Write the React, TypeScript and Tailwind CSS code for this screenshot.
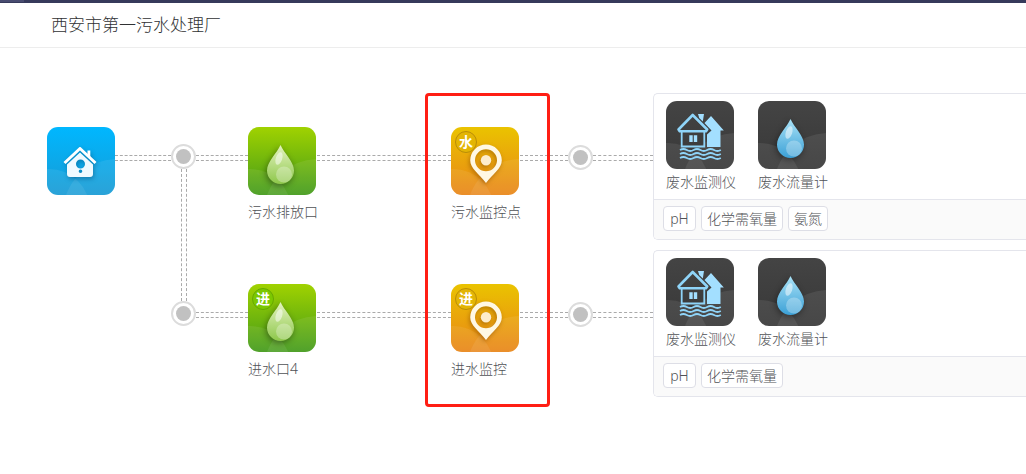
import type { ReactNode } from "react";

type Tone = "blue" | "green" | "orange" | "dark";

const tones: Record<Tone, [string, string]> = {
  blue: ["#00b7ff", "#189bd4"],
  green: ["#a0d200", "#429a1a"],
  orange: ["#eac300", "#e98518"],
  dark: ["#444444", "#383838"],
};

const badgeTones: Record<string, string> = {
  green: "bg-[#7cc800] border-[#67a800]",
  orange: "bg-[#e3b505] border-[#b98d08]",
};

function Tile({
  tone,
  badge,
  children,
}: {
  tone: Tone;
  badge?: string;
  children: ReactNode;
}) {
  const [from, to] = tones[tone];
  return (
    <div className="relative size-[68px] shrink-0 overflow-hidden rounded-[11px]">
      <svg viewBox="0 0 68 68" className="block size-full" aria-hidden="true">
        <defs>
          <linearGradient id={`bg-${tone}`} x1="0" y1="0" x2="0" y2="1">
            <stop offset="0" stopColor={from} />
            <stop offset="1" stopColor={to} />
          </linearGradient>
        </defs>
        <rect width="68" height="68" fill={`url(#bg-${tone})`} />
        {/* Hills */}
        <circle cx="2" cy="83" r="41" fill="#fff" opacity="0.08" />
        <circle cx="70" cy="86" r="54" fill="#fff" opacity="0.08" />
        {children}
      </svg>
      {badge && (
        <span
          className={`absolute top-1 left-1 flex size-[22px] items-center justify-center rounded-full border text-[14px] leading-none font-bold text-white ${badgeTones[tone]}`}
        >
          {badge}
        </span>
      )}
    </div>
  );
}

function HomeGlyph() {
  return (
    <g style={{ filter: "drop-shadow(1px 2px 2px rgba(0,60,100,0.4))" }}>
      <path
        d="M17.5 36 33 21.500 48.500 36"
        fill="none"
        stroke="#fff"
        strokeWidth="3"
        strokeLinejoin="round"
      />
      <path d="M40.500 23.500h2.800v8l-2.800-2.600z" fill="#fff" />
      <path
        fillRule="evenodd"
        fill="#effaff"
        d="M33 25.500 20 37.500v9.500q0 3 3 3h20q3 0 3-3V37.500zM33.500 32.500a4.500 4.500 0 1 1 0 9 4.500 4.500 0 0 1 0-9zM33.500 42.500a1.800 1.800 0 1 1 0 3.600 1.800 1.800 0 0 1 0-3.600z"
      />
    </g>
  );
}

function DropGlyph({ tone }: { tone: "green" | "blue" }) {
  const green = tone === "green";
  return (
    <g>
      <defs>
        <linearGradient id={`drop-${tone}`} x1="0" y1="0" x2="0" y2="1">
          <stop offset="0" stopColor={green ? "#e4f3c0" : "#a9e2f7"} />
          <stop offset="1" stopColor={green ? "#8dc74a" : "#3ba0d6"} />
        </linearGradient>
      </defs>
      <path
        d="M32.500 18C29 26 19 35 19 43.500a13.500 13.500 0 0 0 27 0C46 35 36 26 32.500 18z"
        fill={`url(#drop-${tone})`}
        style={{ filter: "drop-shadow(-1px 2px 3px rgba(0,0,0,0.4))" }}
      />
      <circle cx="36" cy="47.500" r="8" fill="#fff" opacity="0.28" />
      <ellipse
        cx="31"
        cy="31.500"
        rx="3.200"
        ry="6.500"
        transform="rotate(18 31 31.500)"
        fill="#fff"
        opacity="0.5"
      />
    </g>
  );
}

function PinGlyph() {
  return (
    <g style={{ filter: "drop-shadow(-1px 2px 2px rgba(130,70,0,0.5))" }}>
      <path
        fillRule="evenodd"
        fill="#fff8e4"
        d="M35 17.500a15.800 15.800 0 0 0-15.800 15.800c0 8 9 14 15.800 22.700 6.800-8.700 15.800-14.700 15.800-22.700A15.800 15.800 0 0 0 35 17.500zM35 22.300a11 11 0 1 1 0 22 11 11 0 0 1 0-22z"
      />
      <circle cx="35" cy="33.300" r="5.200" fill="#fdeccb" />
    </g>
  );
}

function MonitorGlyph() {
  return (
    <g fill="none" stroke="#8fd4f8">
      {/* Back building */}
      <path
        d="M45 15 57.800 29.500H54.500V46H41V33.500L45.500 29.500 38.500 22z"
        fill="#a3dfff"
        stroke="none"
      />
      <path d="M32 13h6l-1.200 7.500-3.600-3.500z" fill="#a3dfff" stroke="none" />
      <path
        d="M12.500 28.500 26.700 14l14.500 14.500-1.200 1.700H13.700z"
        strokeWidth="2.600"
        strokeLinejoin="round"
      />
      <path d="M15.700 31v14.500h22.600V31" strokeWidth="1.800" />
      <path d="M23.300 34.300h3.400v6.700h-3.400zM27.800 34.300h3.400v6.700h-3.400z" fill="#a3dfff" stroke="none" />
      {[49, 53, 57].map((y) => (
        <path
          key={y}
          d={`M14 ${y}q3.400-2 6.800 0t6.800 0 6.800 0 6.800 0 6.800 0 6.800 0`}
          strokeWidth="1.800"
        />
      ))}
    </g>
  );
}

function Connector({ className }: { className: string }) {
  return (
    <div
      className={`mt-[62px] h-[6px] shrink-0 border-y border-dashed border-[#aaa] ${className}`}
    />
  );
}

function Node() {
  return (
    <div className="flex size-[25px] shrink-0 items-center justify-center rounded-full border-2 border-[#dcdcdc] bg-white">
      <div className="size-[15px] rounded-full bg-[#c1c1c1]" />
    </div>
  );
}

function Station({ label, children }: { label: string; children: ReactNode }) {
  return (
    <div className="w-[69px] shrink-0 pt-[34px]">
      {children}
      <p className="mt-[7px] leading-5 whitespace-nowrap">{label}</p>
    </div>
  );
}

function DevicePanel({ factors }: { factors: string[] }) {
  return (
    <section className="min-w-0 flex-1 overflow-hidden rounded-l-[5px] border border-r-0 border-[#e4e5ec]">
      <div className="flex gap-6 px-3 pt-[7px] pb-[7px]">
        <div className="w-[68px]">
          <Tile tone="dark">
            <MonitorGlyph />
          </Tile>
          <p className="mt-[3px] leading-5 whitespace-nowrap">废水监测仪</p>
        </div>
        <div className="w-[68px]">
          <Tile tone="dark">
            <DropGlyph tone="blue" />
          </Tile>
          <p className="mt-[3px] leading-5 whitespace-nowrap">废水流量计</p>
        </div>
      </div>
      <ul className="flex gap-[5px] border-t border-[#e4e5ec] bg-[#fafafa] px-[9px] pt-[6px] pb-2">
        {factors.map((factor) => (
          <li
            key={factor}
            className="flex h-[25px] min-w-[33px] items-center justify-center rounded border border-[#dddee6] bg-white px-[5px]"
          >
            {factor}
          </li>
        ))}
      </ul>
    </section>
  );
}

const lines = [
  {
    outlet: "污水排放口",
    point: "污水监控点",
    pointBadge: "水",
    factors: ["pH", "化学需氧量", "氨氮"],
  },
  {
    outlet: "进水口4",
    outletBadge: "进",
    point: "进水监控",
    pointBadge: "进",
    factors: ["pH", "化学需氧量"],
  },
];

export default function App() {
  return (
    <div className="min-h-screen overflow-hidden bg-white font-['Noto_Sans','Noto_Sans_CJK_SC',sans-serif] text-sm font-light text-[#505256]">
      <div className="h-[3px] bg-[#363a5b]">
        <div className="h-[2px] w-6 bg-[#484c70]" />
      </div>
      <header className="border-b border-[#ededed] px-[51px] py-[10px]">
        <h1 className="text-[17px] leading-6 text-[#303133]">
          西安市第一污水处理厂
        </h1>
      </header>

      <main className="flex items-start pt-[45px] pl-[47px]">
        <div className="pt-[34px]">
          <Tile tone="blue">
            <HomeGlyph />
          </Tile>
        </div>
        <Connector className="w-[56px]" />

        {/* Trunk joining both lines */}
        <div className="shrink-0 pt-[51px]">
          <Node />
          <div className="ml-[10px] h-[132px] w-[6px] border-x border-dashed border-[#aaa]" />
          <Node />
        </div>

        <div className="relative flex min-w-0 flex-1 flex-col gap-[10px]">
          {lines.map((line) => (
            <div key={line.outlet} className="flex items-start">
              <Connector className="w-[52px]" />
              <Station label={line.outlet}>
                <Tile tone="green" badge={line.outletBadge}>
                  <DropGlyph tone="green" />
                </Tile>
              </Station>
              <Connector className="w-[134px]" />
              <Station label={line.point}>
                <Tile tone="orange" badge={line.pointBadge}>
                  <PinGlyph />
                </Tile>
              </Station>
              <Connector className="w-[48px]" />
              <div className="pt-[52px]">
                <Node />
              </div>
              <Connector className="w-[60px]" />
              <DevicePanel factors={line.factors} />
            </div>
          ))}
          {/* Highlight around the monitoring points */}
          <div className="pointer-events-none absolute top-0 left-[229px] h-[314px] w-[125px] rounded-[4px] border-3 border-[#ff1e14]" />
        </div>
      </main>
    </div>
  );
}
